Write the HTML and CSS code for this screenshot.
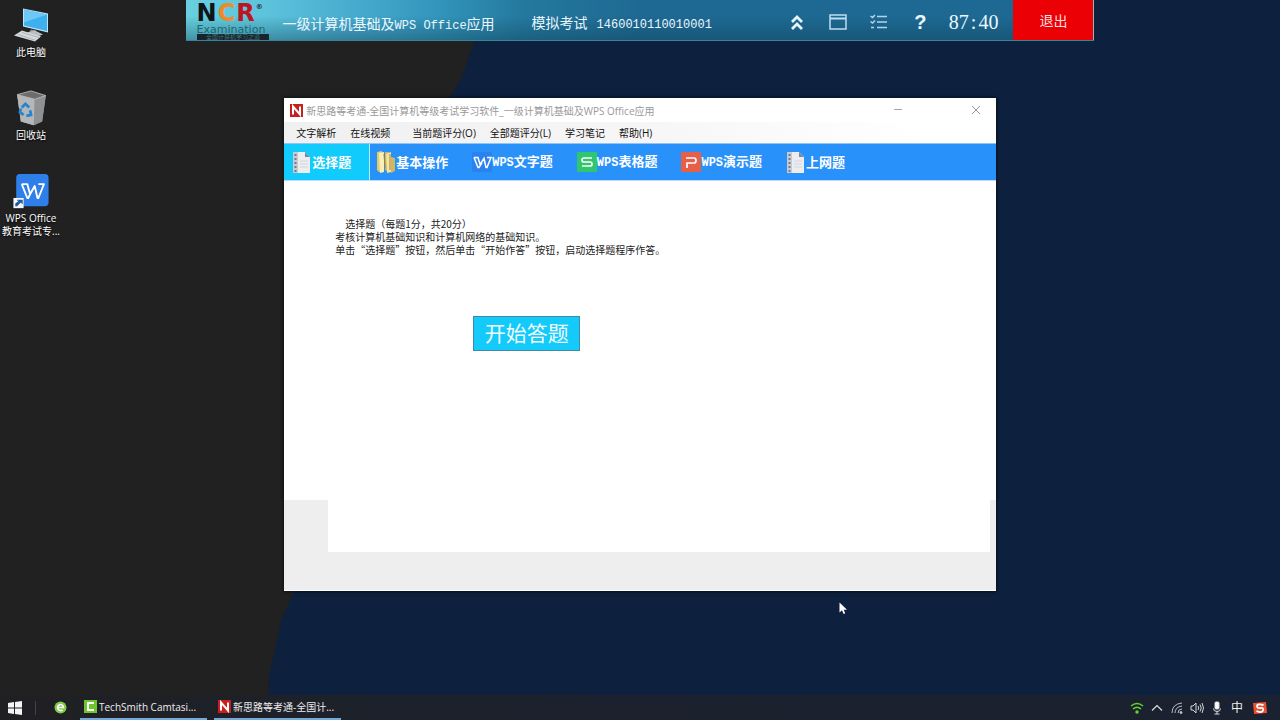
FILE: index.html
```html
<!DOCTYPE html>
<html lang="zh-CN">
<head>
<meta charset="utf-8">
<meta name="viewport" content="width=device-width, initial-scale=1">
<title>新思路等考通</title>
<link rel="stylesheet" href="styles.css">
</head>
<body>
<div class="desktop">
  <div class="wallpaper"></div>

  <nav class="shortcuts" aria-label="桌面">
    <button class="shortcut">
      <svg width="36" height="36" viewBox="0 0 36 36"><path d="M10 1l25 5v19l-25-6z" fill="#bfe4f5"/><path d="M11 2l23 5v16.500l-23-5.500z" fill="#3fb0ee"/><path d="M11 2l23 5-23 8z" fill="#6cc8f6"/><path d="M18 22l5 1v4l-7-2z" fill="#8f9599"/><path d="M14 25l8-2 8 4-8 3z" fill="#b9bfc2"/><path d="M1 28l8-5 19 6-6 5z" fill="#d7dadc"/><path d="M5 27l18 6M9 25l17 5" stroke="#9ea3a6" stroke-width=".7"/></svg>
      <span>此电脑</span>
    </button>
    <button class="shortcut">
      <svg width="36" height="40" viewBox="0 0 36 40"><path d="M3 5l31 1-4 28-9 4-14-4z" fill="#a5a7a8"/><path d="M3 5l15-4 16 5-12 4z" fill="#6b6d6e"/><path d="M3 5l19 5-1 28-14-4z" fill="#b4b6b7"/><path d="M22 10l12-4-4 28-9 4z" fill="#8f9192"/><path d="M3 5l15-4 16 5-12 4z" fill="none" stroke="#b4b5b6"/><path d="M8 19l4-4 4 4M17 22l1 5-5 1M10 27l-4-3 1-4" fill="none" stroke="#2385d0" stroke-width="3"/></svg>
      <span>回收站</span>
    </button>
    <button class="shortcut">
      <svg width="40" height="40" viewBox="0 0 40 40"><rect x="4" y="1" width="35" height="35" rx="4" fill="#2f7fea"/><path d="M10 12h6l3 11 5-9 3 13h1l6-15h-6M10 12l6 15h1l4-8" fill="none" stroke="#fff" stroke-width="2" stroke-linejoin="round"/><rect x="1" y="27" width="11" height="11" fill="#f5f7fa"/><path d="M3 36v-3l4-3H5v-1h6v5l-2-2-4 4z" fill="#1c5a9c"/></svg>
      <span>WPS Office<br>教育考试专...</span>
    </button>
  </nav>

  <header class="exam-bar">
    <div class="logo" aria-label="NCR Examination">
      <div class="logo-main"><span class="n">N</span><span class="c">C</span><span class="r">R</span><span class="mark">®</span></div>
      <div class="logo-sub">Examination</div>
      <div class="logo-strip">全国计算机学习之道</div>
    </div>
    <div class="exam-title">一级计算机基础及<span class="mono">WPS Office</span>应用</div>
    <div class="exam-id">模拟考试<span class="mono number">1460010110010001</span></div>
    <div class="tools">
      <button class="tool" aria-label="收起"><svg width="20" height="20" viewBox="0 0 20 20" fill="none" stroke="#e4f3fc" stroke-width="2.800"><path d="M5 10l5-5 5 5M5 17l5-5 5 5"/></svg></button>
      <button class="tool" aria-label="窗口"><svg width="20" height="20" viewBox="0 0 20 20" fill="none" stroke="#bfdcf0" stroke-width="1.500"><rect x="2" y="3" width="16" height="14"/><path d="M2 6.500h16" stroke-width="2"/></svg></button>
      <button class="tool" aria-label="题目列表"><svg width="20" height="20" viewBox="0 0 20 20" fill="none" stroke="#b4d5e9" stroke-width="1.500"><path d="M8 4.500h10M8 10h10M8 15.500h10M1.500 4l2 1.500L6 3M1.500 9.500l2 1.500L6 8.500M2 15.500h3"/></svg></button>
      <button class="tool help" aria-label="帮助">?</button>
    </div>
    <div class="timer">87<span class="colon">:</span>40</div>
    <button class="exit">退出</button>
  </header>

  <main class="window">
    <div class="titlebar">
      <svg width="13" height="13" viewBox="0 0 13 13"><rect width="13" height="13" fill="#c81e1e"/><path d="M3 10.500v-8l7 8v-8" fill="none" stroke="#fff" stroke-width="2"/></svg>
      <h1>新思路等考通-全国计算机等级考试学习软件_一级计算机基础及WPS Office应用</h1>
      <button class="control" aria-label="最小化"><svg width="10" height="10" viewBox="0 0 10 10"><path d="M1 4.500h8" stroke="#a4a4a4"/></svg></button>
      <button class="control" aria-label="关闭"><svg width="10" height="10" viewBox="0 0 10 10"><path d="M1 1l8 8M9 1l-8 8" stroke="#999"/></svg></button>
    </div>
    <div class="menubar">
      <button>文字解析</button><button class="wide">在线视频</button><button>当前题评分(O)</button><button>全部题评分(L)</button><button>学习笔记</button><button>帮助(H)</button>
    </div>
    <div class="tabs">
      <button class="tab active"><svg class="tab-icon" viewBox="0 0 20 22"><path d="M1 1h12l5 5v16H1z" fill="#ecedf0"/><path d="M13 1l5 5h-5z" fill="#6d8ea5"/><path d="M1 1h5v21H1z" fill="#c9cbd3"/><path d="M3.500 3v18" stroke="#777b8d" stroke-width="2" stroke-dasharray="2 2"/><path d="M8 10h8M8 13h8M8 16h8" stroke="#d5d6dc"/></svg><span>选择题</span></button>
      <button class="tab"><svg class="tab-icon" viewBox="0 0 20 22"><path d="M1 1l5-1v20l-3 1-2-2z" fill="#e8c967"/><path d="M3 2l5-1v20l-4 1z" fill="#fbefb8"/><path d="M9 1h4v20l-4-2z" fill="#d5b252"/><path d="M10 3l5-2v20l-4 1z" fill="#f6e39b"/><path d="M15 6l4 1v13l-4 2z" fill="#d6b65d"/><path d="M8 3l1 14M14 3v16" stroke="#8f864f"/></svg><span>基本操作</span></button>
      <button class="tab"><svg class="tab-icon" viewBox="0 0 20 22"><rect y="1" width="20" height="20" rx="1" fill="#2b82ef"/><path d="M2 6.500h4l2 7 4-6 2 9h1l4-10h-4M2 6.500l4 10h1l3-5" fill="none" stroke="#fff" stroke-width="1.500"/></svg><span><span class="mono">WPS</span>文字题</span></button>
      <button class="tab"><svg class="tab-icon" viewBox="0 0 20 22"><rect y="1" width="20" height="20" rx="1" fill="#2fc66d"/><path d="M15 7H7q-2 0-2 2t2 2h6q2 0 2 2t-2 2H5" fill="none" stroke="#fff" stroke-width="1.700"/></svg><span><span class="mono">WPS</span>表格题</span></button>
      <button class="tab"><svg class="tab-icon" viewBox="0 0 20 22"><rect y="1" width="20" height="20" rx="1" fill="#e75f48"/><path d="M5 7h8q2 0 2 2.500T13 12H6v5" fill="none" stroke="#fff" stroke-width="1.700"/></svg><span><span class="mono">WPS</span>演示题</span></button>
      <button class="tab"><svg class="tab-icon" viewBox="0 0 20 22"><path d="M1 1h12l5 5v16H1z" fill="#ecedf0"/><path d="M13 1l5 5h-5z" fill="#6d8ea5"/><path d="M1 1h5v21H1z" fill="#c9cbd3"/><path d="M3.500 3v18" stroke="#777b8d" stroke-width="2" stroke-dasharray="2 2"/><path d="M8 10h8M8 13h8M8 16h8" stroke="#d5d6dc"/></svg><span>上网题</span></button>
    </div>
    <section class="content">
      <p class="heading">选择题（每题1分，共20分）</p>
      <p>考核计算机基础知识和计算机网络的基础知识。</p>
      <p>单击“选择题”按钮，然后单击“开始作答”按钮，启动选择题程序作答。</p>
      <button class="start">开始答题</button>
    </section>
    <footer class="window-foot"><div class="output"></div></footer>
  </main>

  <svg class="cursor" width="9" height="13" viewBox="0 0 9 13"><path d="M.5 .5v10l2.500-2.200 1.600 3.700 1.600-.7-1.500-3.500h3.300z" fill="#fff"/></svg>

  <div class="taskbar">
    <button class="start-menu" aria-label="开始"><svg width="14" height="14" viewBox="0 0 14 14" fill="#f4f4f4"><path d="M0 2l6-1v5.500H0zM7 1l7-1v6.500H7zM0 7.500h6V13l-6-1zM7 7.500h7V14l-7-1z"/></svg></button>
    <span class="divider"></span>
    <button class="pinned" aria-label="浏览器"><svg width="13" height="13" viewBox="0 0 13 13"><circle cx="6.500" cy="6.500" r="6" fill="#7fcb45"/><path d="M3.500 6.500h6a3 3 0 1 0-1 2.300" fill="none" stroke="#fff" stroke-width="1.600"/></svg></button>
    <button class="task"><svg width="13" height="13" viewBox="0 0 13 13"><rect width="13" height="13" fill="#6fc32c"/><path d="M10 3H4v7h6" fill="none" stroke="#fff" stroke-width="2"/></svg>TechSmith Camtasi...</button>
    <button class="task"><svg width="13" height="13" viewBox="0 0 13 13"><rect width="13" height="13" fill="#c81e1e"/><path d="M3 10.500v-8l7 8v-8" fill="none" stroke="#fff" stroke-width="2"/></svg>新思路等考通-全国计...</button>
    <div class="tray">
      <svg width="14" height="14" viewBox="0 0 14 14" fill="none" stroke="#62d32f" stroke-width="1.500"><path d="M1 5q6-5 12 0M3 8q4-3.500 8 0"/><circle cx="7" cy="11" r="1" fill="#62d32f"/></svg>
      <svg width="14" height="14" viewBox="0 0 14 14" fill="none" stroke="#ddd" stroke-width="1.200"><path d="M2 9.500l5-5 5 5"/></svg>
      <svg width="14" height="14" viewBox="0 0 14 14" fill="none" stroke="#b9bcc4"><path d="M2 12Q2 3 12 2M5 12q0-6 7-7M8 12q0-4 4-4"/><circle cx="11" cy="11.500" r="1" fill="#ddd"/></svg>
      <svg width="14" height="14" viewBox="0 0 14 14" fill="none" stroke="#d5d7dc"><path d="M1 5h2l3-3v10L3 9H1zM8 5q1.500 2 0 4M10 3.500q2.500 3.500 0 7M12 2q3 5 0 10"/></svg>
      <svg width="14" height="14" viewBox="0 0 14 14" fill="none" stroke="#ddd"><rect x="5" y="1" width="4" height="7" rx="1" fill="#fff"/><path d="M3.500 7.500q0 3 3.500 3t3.500-3M7 10.500V13M4.500 13h5"/></svg>
      <button class="ime">中</button>
      <svg class="sogou" width="14" height="14" viewBox="0 0 14 14"><path d="M0 2l13-1 1 11-13 1z" fill="#e8502f"/><path d="M10.500 4Q4 2.500 4 5t3.500 2T10 9.500 3.500 10" fill="none" stroke="#fff" stroke-width="1.800"/></svg>
    </div>
  </div>
</div>
</body>
</html>
```

FILE: styles.css
```css
* { box-sizing: border-box; }

body {
  margin: 0;
  font-family: "Open Sans", "Noto Sans CJK SC", sans-serif;
  font-size: 10px;
}

button {
  margin: 0;
  padding: 0;
  border: 0;
  background: none;
  color: inherit;
  font: inherit;
}

svg { display: block; flex: none; }

.desktop {
  position: relative;
  isolation: isolate;
  display: flex;
  flex-direction: column;
  min-height: 100vh;
  background: #212121;
  overflow: hidden;
}

.wallpaper {
  position: absolute;
  inset: 0;
  z-index: -1;
  background: #0d203d;
  clip-path: polygon(38% 0, 100% 0, 100% 100%, 21% 100%, 21% 94%, 22% 86%, 23% 82%, 32% 50%, 35% 14%, 36% 11%, 37% 6%);
}

/* Desktop shortcuts */
.shortcuts {
  position: absolute;
  top: 7px;
  left: 0;
  width: 62px;
  display: grid;
  gap: 31px;
  color: #fff;
}

.shortcut {
  display: grid;
  justify-items: center;
  gap: 2px;
  line-height: 13px;
  white-space: nowrap;
  text-shadow: 0 1px 2px #000;
}

.shortcut svg { height: 37px; }

/* Exam bar */
.exam-bar {
  width: 71%;
  height: 41px;
  margin: 0 auto;
  display: flex;
  align-items: center;
  color: #e9f8ff;
  font-family: "Liberation Serif", "Noto Sans CJK SC", serif;
  font-size: 14px;
  white-space: nowrap;
  border-bottom: 1px solid #3c8299;
  background:
    linear-gradient(180deg, rgba(20, 60, 90, 0) 40%, rgba(15, 60, 80, .4)),
    linear-gradient(90deg, #68d0df 0, #5cc3db 9%, #48acd0 18%, #3294ba 28%, #24799f 37%, #1e6993 50%, #1e6993 100%);
}

.logo {
  width: 72px;
  margin-left: 11px;
  align-self: stretch;
  font-family: "DejaVu Sans", sans-serif;
}

.logo-main {
  display: flex;
  font-size: 24px;
  font-weight: bold;
  line-height: 26px;
  gap: 1px;
}

.logo-main .n { color: #10151a; }
.logo-main .c { color: #ee8a28; }
.logo-main .r { color: #bd1422; }
.logo-main .mark { font-size: 7px; line-height: 14px; color: #17303a; }

.logo-sub {
  color: #1c6770;
  font-size: 11px;
  line-height: 8px;
}

.logo-strip {
  background: #17242b;
  color: #3e7883;
  font-size: 6px;
  line-height: 6px;
  text-align: center;
}

.mono { font-family: "Liberation Mono", monospace; font-size: 12px; }

.exam-title { margin-left: 14px; padding-top: 6px; }

.exam-id { margin-left: 37px; padding-top: 4px; }
.number { margin-left: 9px; }

.tools { display: flex; margin-left: auto; padding-top: 4px; }

.tool {
  width: 41px;
  height: 24px;
  display: grid;
  place-items: center;
}

.help {
  font-family: "Liberation Sans", sans-serif;
  font-size: 20px;
  font-weight: bold;
  line-height: 20px;
}

.timer {
  margin: 4px 15px 0 8px;
  font-size: 20px;
}

.colon { padding: 0 2px; }

.exit {
  width: 81px;
  align-self: stretch;
  background: #ea0005;
  color: #ffdede;
  border-right: 1px solid #94b6c0;
}

/* Application window */
.window {
  width: 55.6%;
  margin: 57px auto 0;
  background: #fff;
  box-shadow: 0 0 3px 1px rgba(0, 0, 0, .5);
}

.titlebar {
  height: 24px;
  padding-left: 6px;
  display: flex;
  align-items: center;
  gap: 3px;
  color: #999;
}

.titlebar h1 {
  flex: 1;
  margin: 0;
  font-size: 10px;
  font-weight: normal;
  white-space: nowrap;
}

.control {
  width: 39px;
  height: 24px;
  display: grid;
  place-items: center;
}

.control + .control { margin-left: 36px; }

.menubar {
  height: 21px;
  padding-left: 12px;
  display: flex;
  align-items: center;
  gap: 14px;
  color: #111;
  background: linear-gradient(90deg, #f0f0f0, #f6f6f6 50%, #fff 90%);
  white-space: nowrap;
}

.menubar .wide { margin-right: 8px; }

.tabs {
  height: 38px;
  display: flex;
  background: #2991fa;
  color: #fff;
  border-top: 1px solid #8fc5f5;
  border-bottom: 1px solid #b9dcfb;
}

.tab {
  display: flex;
  align-items: center;
  padding: 0 18px 0 6px;
  font-family: "Noto Sans CJK SC", sans-serif;
  font-size: 13px;
  font-weight: bold;
  line-height: 18px;
  white-space: nowrap;
}

.tab > span { padding-bottom: 1px; }

.tab.active {
  padding-left: 8px;
  background: #10cbfb;
  border-right: 1px solid #b9ecfd;
}

.tab-icon { width: 20px; height: 22px; }

.content {
  min-height: 319px;
  padding: 36px 51px;
  font-family: "Noto Sans CJK SC", sans-serif;
  line-height: 13px;
  color: #222;
}

.content p { margin: 0; }
.content .heading { padding-left: 10px; }

.start {
  margin: 60px 0 0 138px;
  padding-bottom: 4px;
  width: 107px;
  height: 35px;
  background: #14cafa;
  border: 1px solid #3d8ba5;
  color: #f1fdff;
  font-size: 21px;
  line-height: 28px;
}

.window-foot {
  padding: 0 6px 38px 44px;
  background: #eee;
  border-bottom: 1px solid #fff;
}

.output { height: 52px; background: #fff; }

.cursor {
  position: absolute;
  left: 839px;
  top: 602px;
}

/* Taskbar */
.taskbar {
  height: 25px;
  margin-top: auto;
  display: flex;
  align-items: center;
  color: #eee;
  background: linear-gradient(90deg, #202023, #1c212c 35%, #1a2130);
}

.start-menu { margin-left: 8px; }
.divider { width: 1px; height: 14px; margin: 0 18px 0 13px; background: #444; }

.task {
  width: 127px;
  height: 25px;
  margin-left: 7px;
  padding: 0 4px;
  display: flex;
  align-items: center;
  gap: 2px;
  border-bottom: 2px solid #76a9d6;
  white-space: nowrap;
}

.pinned { margin-right: 6px; }

.tray {
  margin-left: auto;
  padding-right: 13px;
  display: flex;
  align-items: center;
  gap: 6px;
}

.ime { width: 14px; font-size: 12px; line-height: 16px; }
.sogou { margin-left: 3px; }
```
